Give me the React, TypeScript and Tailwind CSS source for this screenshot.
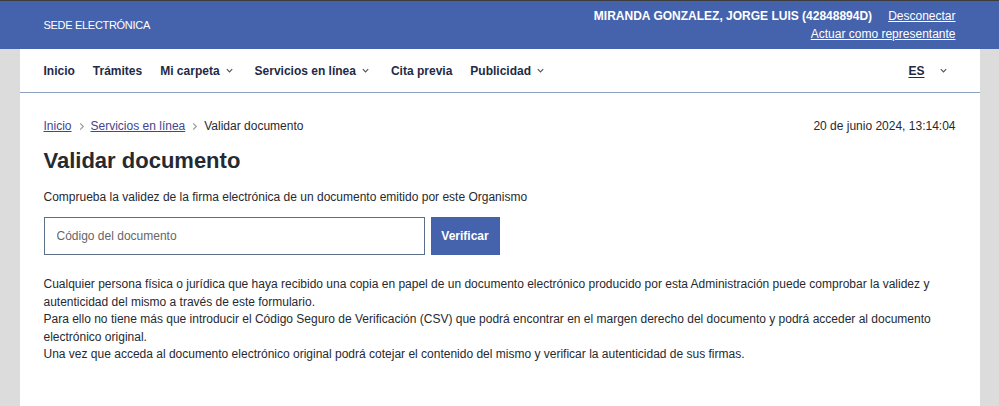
import React from 'react';

const Chevron: React.FC<{ dir?: 'down' | 'right' }> = ({ dir = 'down' }) => (
    <svg width="9" height="9" viewBox="0 0 10 10" className="shrink-0" fill="none" stroke="currentColor" strokeWidth="1.3">
        {dir === 'down' ? <path d="M2 3.5 L5 6.5 L8 3.5" /> : <path d="M3.5 1.5 L7 5 L3.5 8.5" />}
    </svg>
);

const navItems: { label: string; menu?: boolean }[] = [
    { label: 'Inicio' },
    { label: 'Trámites' },
    { label: 'Mi carpeta', menu: true },
    { label: 'Servicios en línea', menu: true },
    { label: 'Cita previa' },
    { label: 'Publicidad', menu: true },
];

export default function App() {
    return (
        <div className="min-h-[406px] bg-[#dcdcdc] text-[#262a30]" style={{ fontFamily: '"Liberation Sans", Arial, sans-serif' }}>
            {/* top bar */}
            <header className="bg-[#4563ad] border-t border-[#3c3c3c] text-white">
                <div className="w-[960px] mx-auto px-6 h-[48px] flex items-center justify-between">
                    <span className="text-[11px] tracking-[-0.3px]">SEDE ELECTRÓNICA</span>
                    <div className="flex flex-col items-end gap-[3px] text-[12px] leading-[15px] pt-[1px]">
                        <div className="flex gap-4">
                            <span className="font-bold">MIRANDA GONZALEZ, JORGE LUIS (42848894D)</span>
                            <a className="underline">Desconectar</a>
                        </div>
                        <a className="underline">Actuar como representante</a>
                    </div>
                </div>
            </header>

            <div className="w-[960px] mx-auto bg-white min-h-[357px]">
                {/* nav */}
                <nav className="h-[44px] border-b border-[#8aa2bd] px-6 flex items-center justify-between text-[12px] font-bold text-[#1f2a44]">
                    <ul className="flex items-center gap-[18px]">
                        {navItems.map((item) => (
                            <li key={item.label} className="flex items-center gap-[5px]">
                                {item.label}
                                {item.menu && <span className="text-[#555] mr-[3px]"><Chevron /></span>}
                            </li>
                        ))}
                    </ul>
                    <div className="flex items-center gap-[14px] pr-[8px] font-semibold">
                        <span className="underline underline-offset-2">ES</span>
                        <span className="text-[#555]"><Chevron /></span>
                    </div>
                </nav>

                {/* content */}
                <main className="px-6 pt-[25px] pb-10 text-[12px]">
                    <div className="flex justify-between items-center leading-[16px]">
                        <div className="flex items-center gap-[5px]">
                            <a className="underline text-[#44448f]">Inicio</a>
                            <span className="text-[#999]"><Chevron dir="right" /></span>
                            <a className="underline text-[#44448f]">Servicios en línea</a>
                            <span className="text-[#999]"><Chevron dir="right" /></span>
                            <span>Validar documento</span>
                        </div>
                        <span>20 de junio 2024, 13:14:04</span>
                    </div>

                    <h1 className="text-[22px] font-bold mt-[14px] leading-[26px]">Validar documento</h1>

                    <p className="mt-[15px] leading-[16px]">Comprueba la validez de la firma electrónica de un documento emitido por este Organismo</p>

                    <div className="flex gap-[6px] mt-[12px]">
                        <input
                            placeholder="Código del documento"
                            className="w-[381px] h-[38px] border border-[#5a6e86] pl-[12px] pr-3 text-[12px] placeholder:text-[#666] outline-none"
                        />
                        <button className="w-[69px] h-[38px] bg-[#4563ad] text-white text-[12px] font-semibold">Verificar</button>
                    </div>

                    <div className="mt-[21px] leading-[17.5px]">
                        <p>Cualquier persona física o jurídica que haya recibido una copia en papel de un documento electrónico producido por esta Administración puede comprobar la validez y autenticidad del mismo a través de este formulario.</p>
                        <p>Para ello no tiene más que introducir el Código Seguro de Verificación (CSV) que podrá encontrar en el margen derecho del documento y podrá acceder al documento electrónico original.</p>
                        <p>Una vez que acceda al documento electrónico original podrá cotejar el contenido del mismo y verificar la autenticidad de sus firmas.</p>
                    </div>
                </main>
            </div>
        </div>
    );
}
